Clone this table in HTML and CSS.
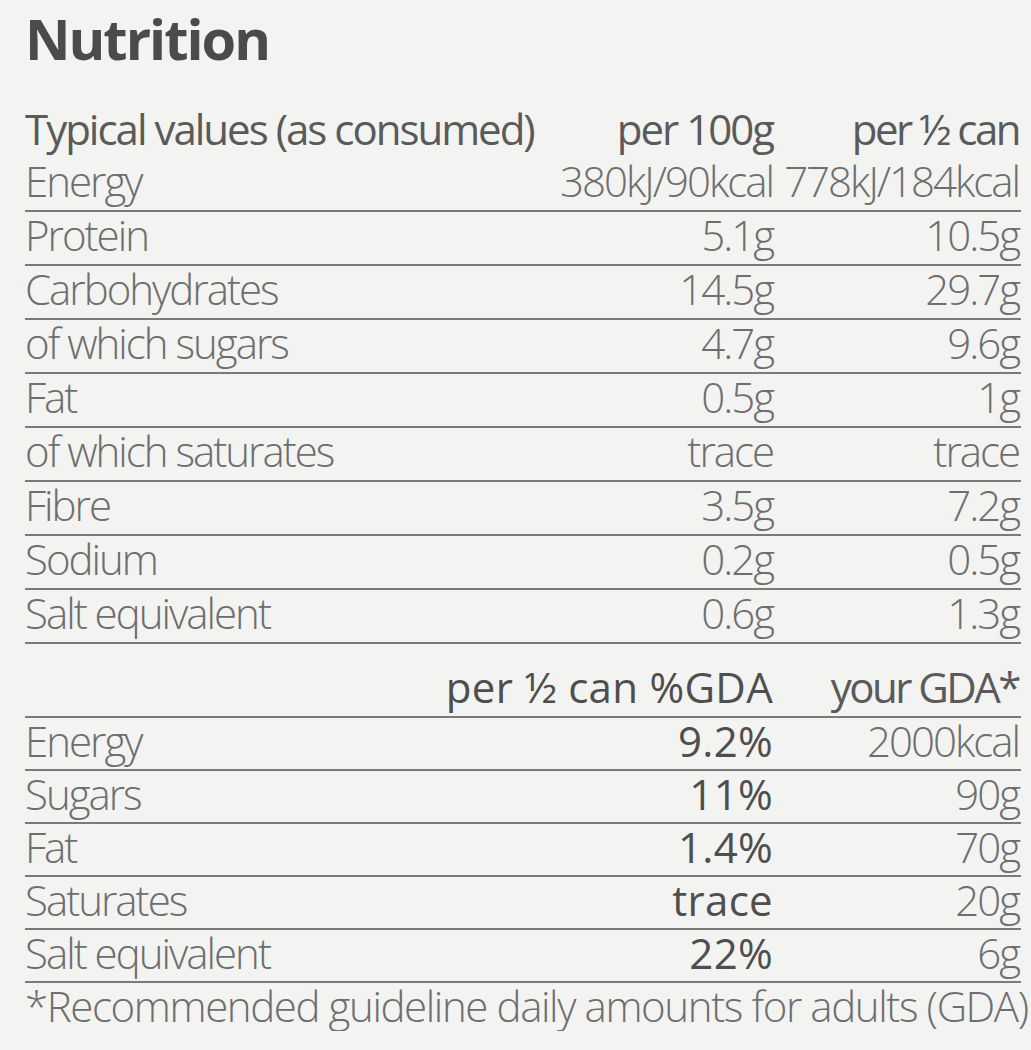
FILE: index.html
```html
<!DOCTYPE html>
<html lang="en">
<head>
<meta charset="utf-8">
<title>Nutrition</title>
<link rel="stylesheet" href="styles.css">
</head>
<body>
<main class="label">
  <h1 class="title">Nutrition</h1>
  <div class="table">
    <div class="row head nob"><span class="name">Typical values (as consumed)</span><span class="v1">per 100g</span><span class="v2">per ½ can</span></div>
    <div class="row"><span class="name">Energy</span><span class="v1">380kJ/90kcal</span><span class="v2">778kJ/184kcal</span></div>
    <div class="row"><span class="name">Protein</span><span class="v1">5.1g</span><span class="v2">10.5g</span></div>
    <div class="row"><span class="name">Carbohydrates</span><span class="v1">14.5g</span><span class="v2">29.7g</span></div>
    <div class="row"><span class="name">of which sugars</span><span class="v1">4.7g</span><span class="v2">9.6g</span></div>
    <div class="row"><span class="name">Fat</span><span class="v1">0.5g</span><span class="v2">1g</span></div>
    <div class="row"><span class="name">of which saturates</span><span class="v1">trace</span><span class="v2">trace</span></div>
    <div class="row"><span class="name">Fibre</span><span class="v1">3.5g</span><span class="v2">7.2g</span></div>
    <div class="row"><span class="name">Sodium</span><span class="v1">0.2g</span><span class="v2">0.5g</span></div>
    <div class="row"><span class="name">Salt equivalent</span><span class="v1">0.6g</span><span class="v2">1.3g</span></div>
    <div class="row head gdahead"><span class="v1 wide strong">per ½ can %GDA</span><span class="v2">your GDA*</span></div>
    <div class="row gda"><span class="name">Energy</span><span class="v1 strong">9.2%</span><span class="v2">2000kcal</span></div>
    <div class="row gda"><span class="name">Sugars</span><span class="v1 strong">11%</span><span class="v2">90g</span></div>
    <div class="row gda"><span class="name">Fat</span><span class="v1 strong">1.4%</span><span class="v2">70g</span></div>
    <div class="row gda"><span class="name">Saturates</span><span class="v1 strong">trace</span><span class="v2">20g</span></div>
    <div class="row gda"><span class="name">Salt equivalent</span><span class="v1 strong">22%</span><span class="v2">6g</span></div>
  </div>
  <p class="note">*Recommended guideline daily amounts for adults (GDA)</p>
</main>
</body>
</html>
```

FILE: styles.css
```css
html, body {
  margin: 0;
  padding: 0;
}
body {
  background: #f3f3f2;
  font-family: "Open Sans", "DejaVu Sans", sans-serif;
  color: #6e6e6e;
}
.label {
  width: 996px;
  padding: 0 0 0 25px;
}
.title {
  margin: 0;
  padding-top: 2px;
  font-size: 56px;
  line-height: 72px;
  font-weight: 700;
  color: #4b4b4b;
  letter-spacing: -2px;
}
.table {
  margin-top: 32px;
  display: flex;
  flex-direction: column;
}
.row {
  display: grid;
  grid-template-columns: minmax(0, 1fr) 260px 246px;
  font-size: 42px;
  font-weight: 300;
  line-height: 46px;
  letter-spacing: -2px;
  padding-bottom: 6px;
  border-bottom: 2px solid #7a7a7a;
  white-space: nowrap;
}
.row.nob {
  border-bottom: none;
  padding-bottom: 6px;
}
.row.head {
  font-weight: 400;
  color: #5a5a5a;
}
.row.head .v2 {
  letter-spacing: -2.5px;
}
.row.gdahead {
  padding-top: 20px;
}
.row.gda {
  padding-bottom: 5px;
}
.v1, .v2 {
  text-align: right;
}
.v1 {
  padding-right: 2px;
}
.v2 {
  padding-right: 2px;
}
.wide {
  grid-column: 1 / span 2;
}
.strong {
  font-weight: 500;
  letter-spacing: 0.3px;
  color: #4e4e4e;
}
.note {
  margin: -2px 0 0;
  font-size: 42px;
  font-weight: 300;
  line-height: 50px;
  letter-spacing: -1.4px;
  white-space: nowrap;
  color: #6e6e6e;
}
```
